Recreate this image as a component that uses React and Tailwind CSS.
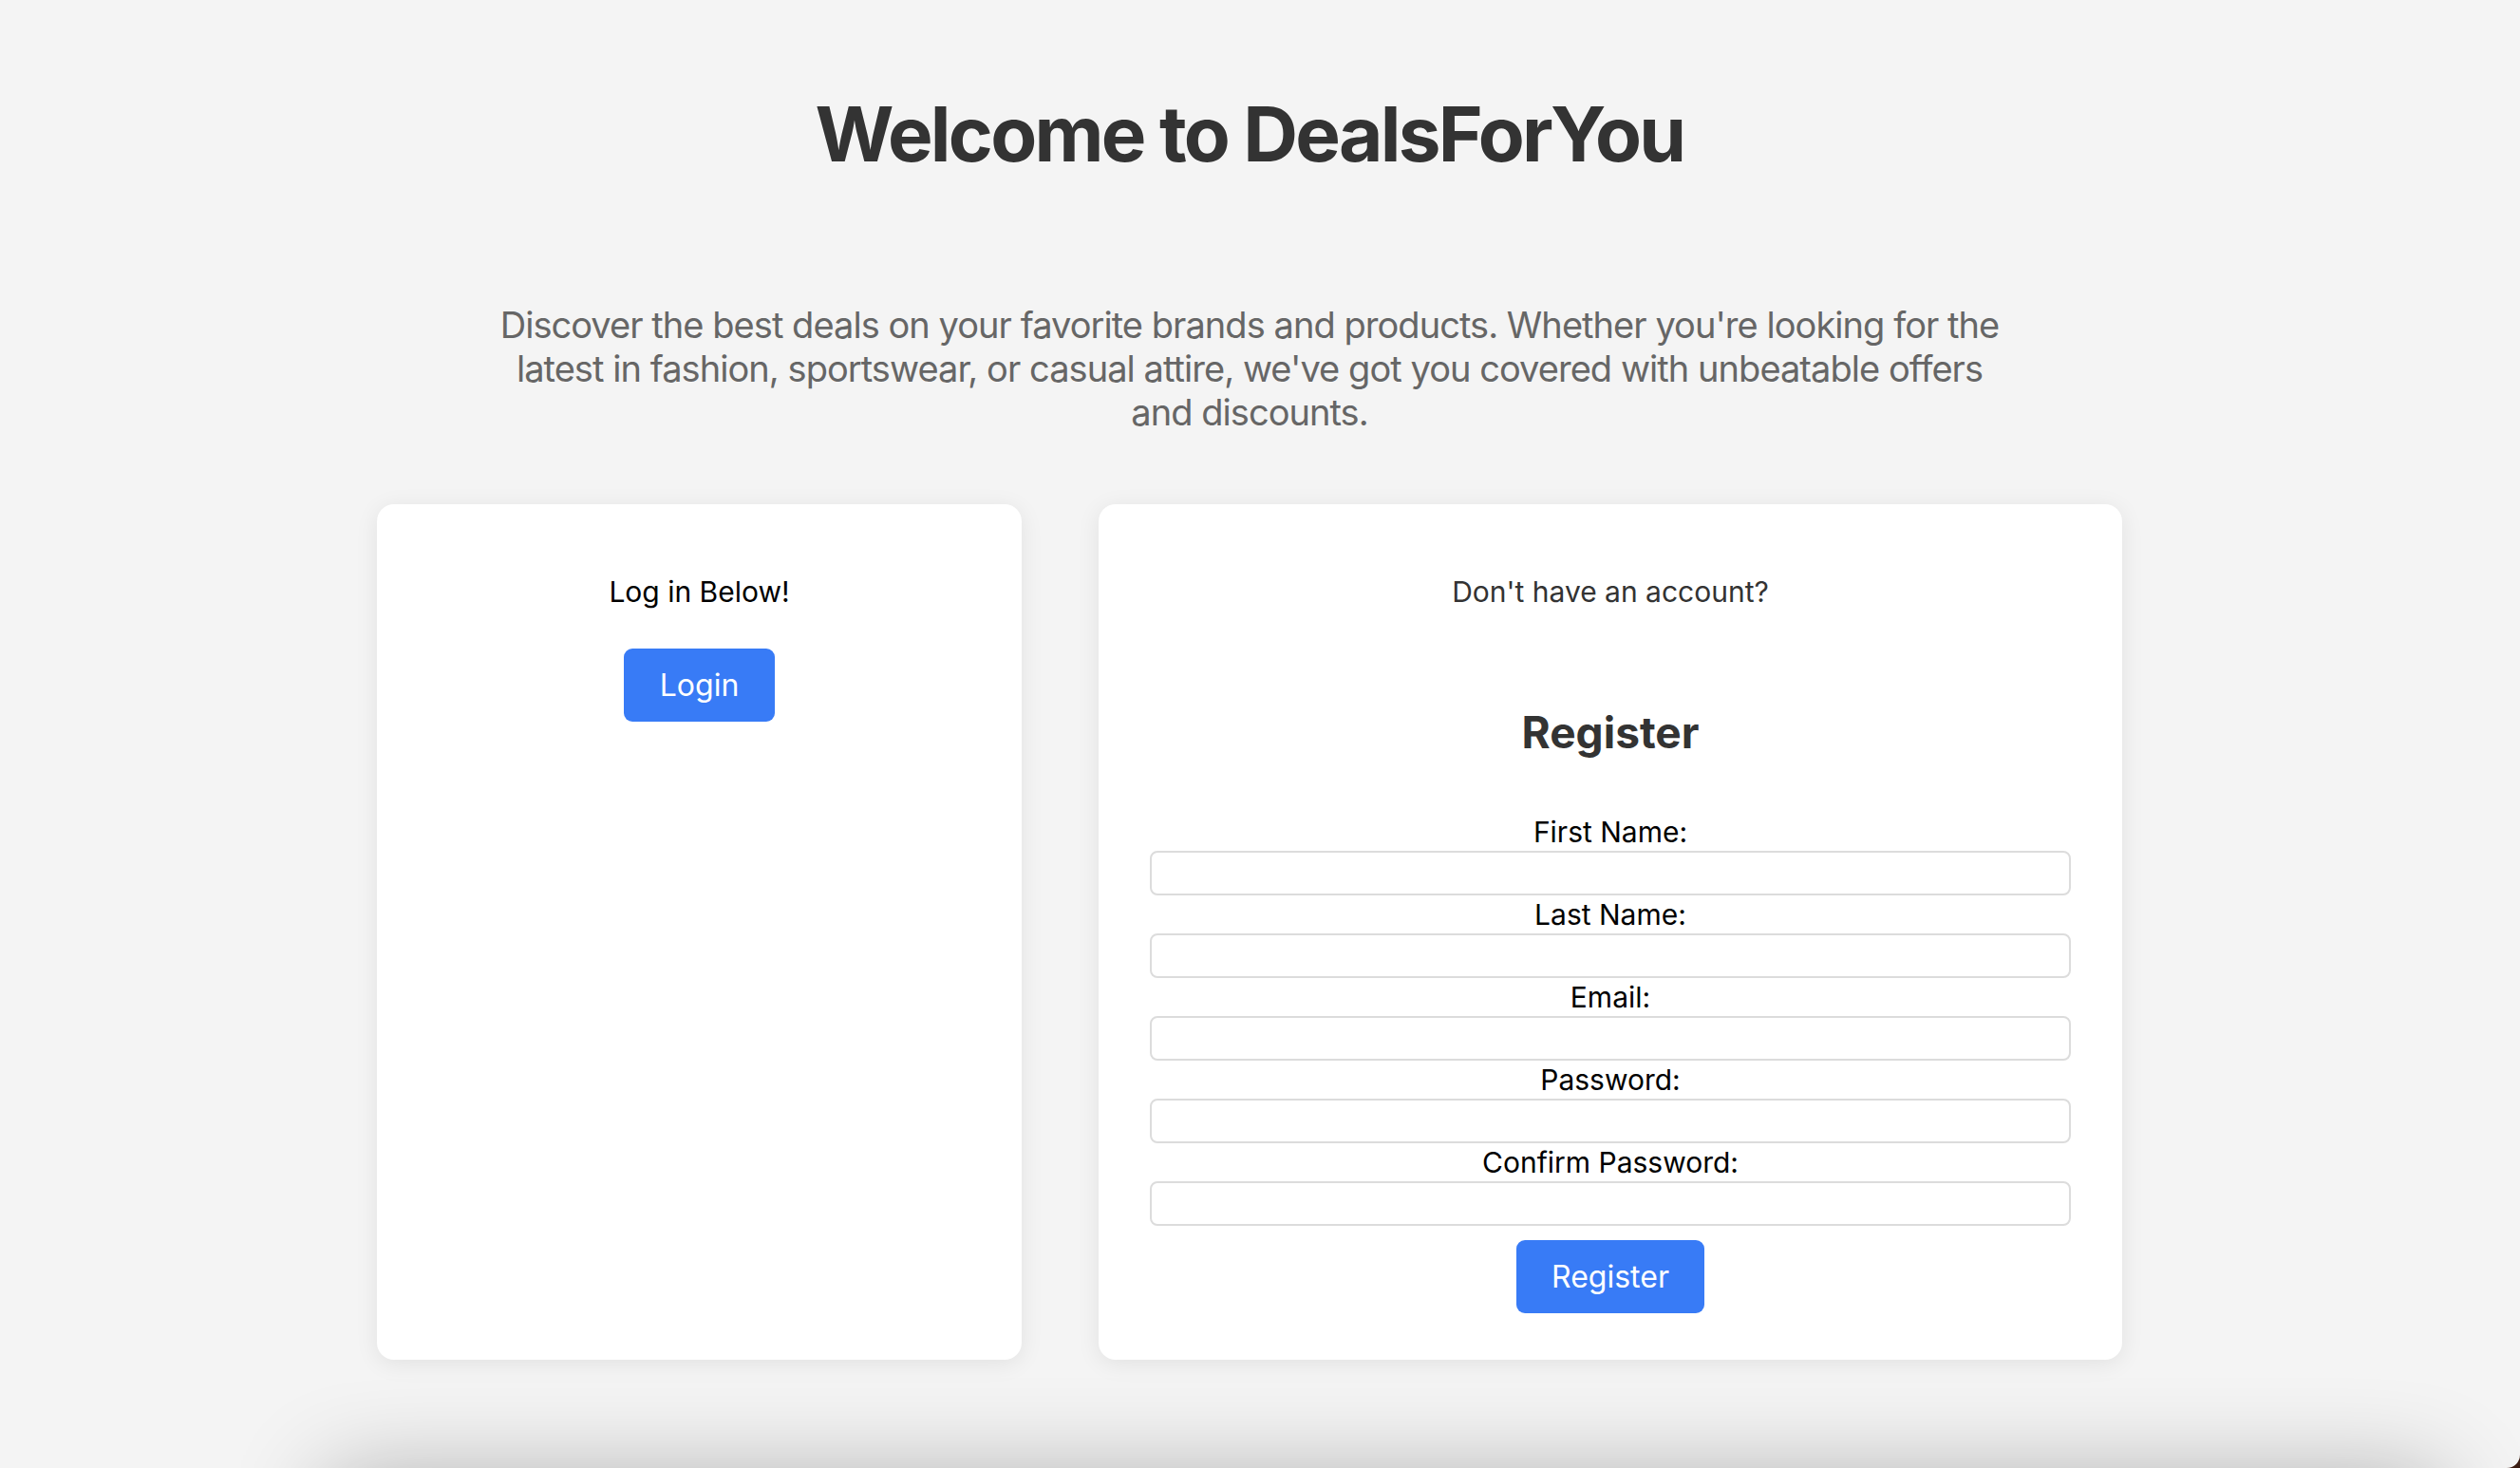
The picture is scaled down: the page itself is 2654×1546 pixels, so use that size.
import React, { useState } from 'react';

const fields = [
  { key: 'firstName', label: 'First Name:', type: 'text' },
  { key: 'lastName', label: 'Last Name:', type: 'text' },
  { key: 'email', label: 'Email:', type: 'email' },
  { key: 'password', label: 'Password:', type: 'password' },
  { key: 'confirmPassword', label: 'Confirm Password:', type: 'password' }
];

const App = () => {
  const [formData, setFormData] = useState({
    firstName: '',
    lastName: '',
    email: '',
    password: '',
    confirmPassword: ''
  });

  const handleSubmit = (e) => {
    e.preventDefault();
  };

  return (
    <div className="min-h-screen bg-[#3a1c12]">
      <div
        className="relative h-[1546px] overflow-hidden rounded-br-[14px] bg-[#f4f4f4]"
        style={{ fontFamily: 'Inter, "Noto Sans", sans-serif' }}
      >
        <div className="flex w-[2632px] flex-col items-center pt-[101px]">
          <h1 className="text-[80px] font-bold leading-none tracking-[-0.034em] text-[#333]">
            Welcome to DealsForYou
          </h1>

          <p className="mt-[138px] max-w-[1590px] text-center text-[38px] leading-[46px] tracking-[-0.025em] text-[#666]">
            Discover the best deals on your favorite brands and products. Whether you're looking for the latest in fashion, sportswear, or casual attire, we've got you covered with unbeatable offers and discounts.
          </p>

          <div className="mt-[74px] flex items-stretch gap-[81px]">
            {/* Login card */}
            <div className="flex w-[679px] flex-col items-center rounded-[18px] bg-white pt-[73px] shadow-[0_4px_24px_rgba(0,0,0,0.08)]">
              <p className="text-[30px] leading-[38px] text-black">Log in Below!</p>
              <button
                type="button"
                className="mt-[41px] h-[77px] rounded-[9px] bg-[#387bf6] px-[38px] text-[32px] text-white"
              >
                Login
              </button>
            </div>

            {/* Register card */}
            <div className="flex w-[1078px] flex-col items-center rounded-[18px] bg-white px-[54px] pb-[49px] pt-[73px] shadow-[0_4px_24px_rgba(0,0,0,0.08)]">
              <p className="text-[30px] leading-[38px] text-[#333]">Don't have an account?</p>
              <h2 className="mt-[100px] text-[46px] font-bold leading-[58px] text-[#333]">Register</h2>

              <form onSubmit={handleSubmit} className="mt-[56px] flex w-full flex-col items-center">
                {fields.map(({ key, label, type }) => (
                  <div key={key} className="w-full">
                    <label className="block text-center text-[30px] leading-[40px] text-black">
                      {label}
                    </label>
                    <input
                      type={type}
                      value={formData[key]}
                      onChange={(e) => setFormData({ ...formData, [key]: e.target.value })}
                      className="block h-[47px] w-full rounded-[8px] border-2 border-[#dcdcdc] bg-white px-3 text-[28px]"
                    />
                  </div>
                ))}
                <button
                  type="submit"
                  className="mt-[15px] h-[77px] w-[198px] rounded-[9px] bg-[#387bf6] text-[32px] text-white"
                >
                  Register
                </button>
              </form>
            </div>
          </div>

          {/* footer, sits below the fold; only its shadow shows */}
          <div className="mt-[124px] h-[200px] w-[2225px] self-start ml-[345px] bg-[#f4f4f4] shadow-[0_0_100px_rgba(0,0,0,0.3)]" />
        </div>
      </div>
    </div>
  );
};

export default App;
